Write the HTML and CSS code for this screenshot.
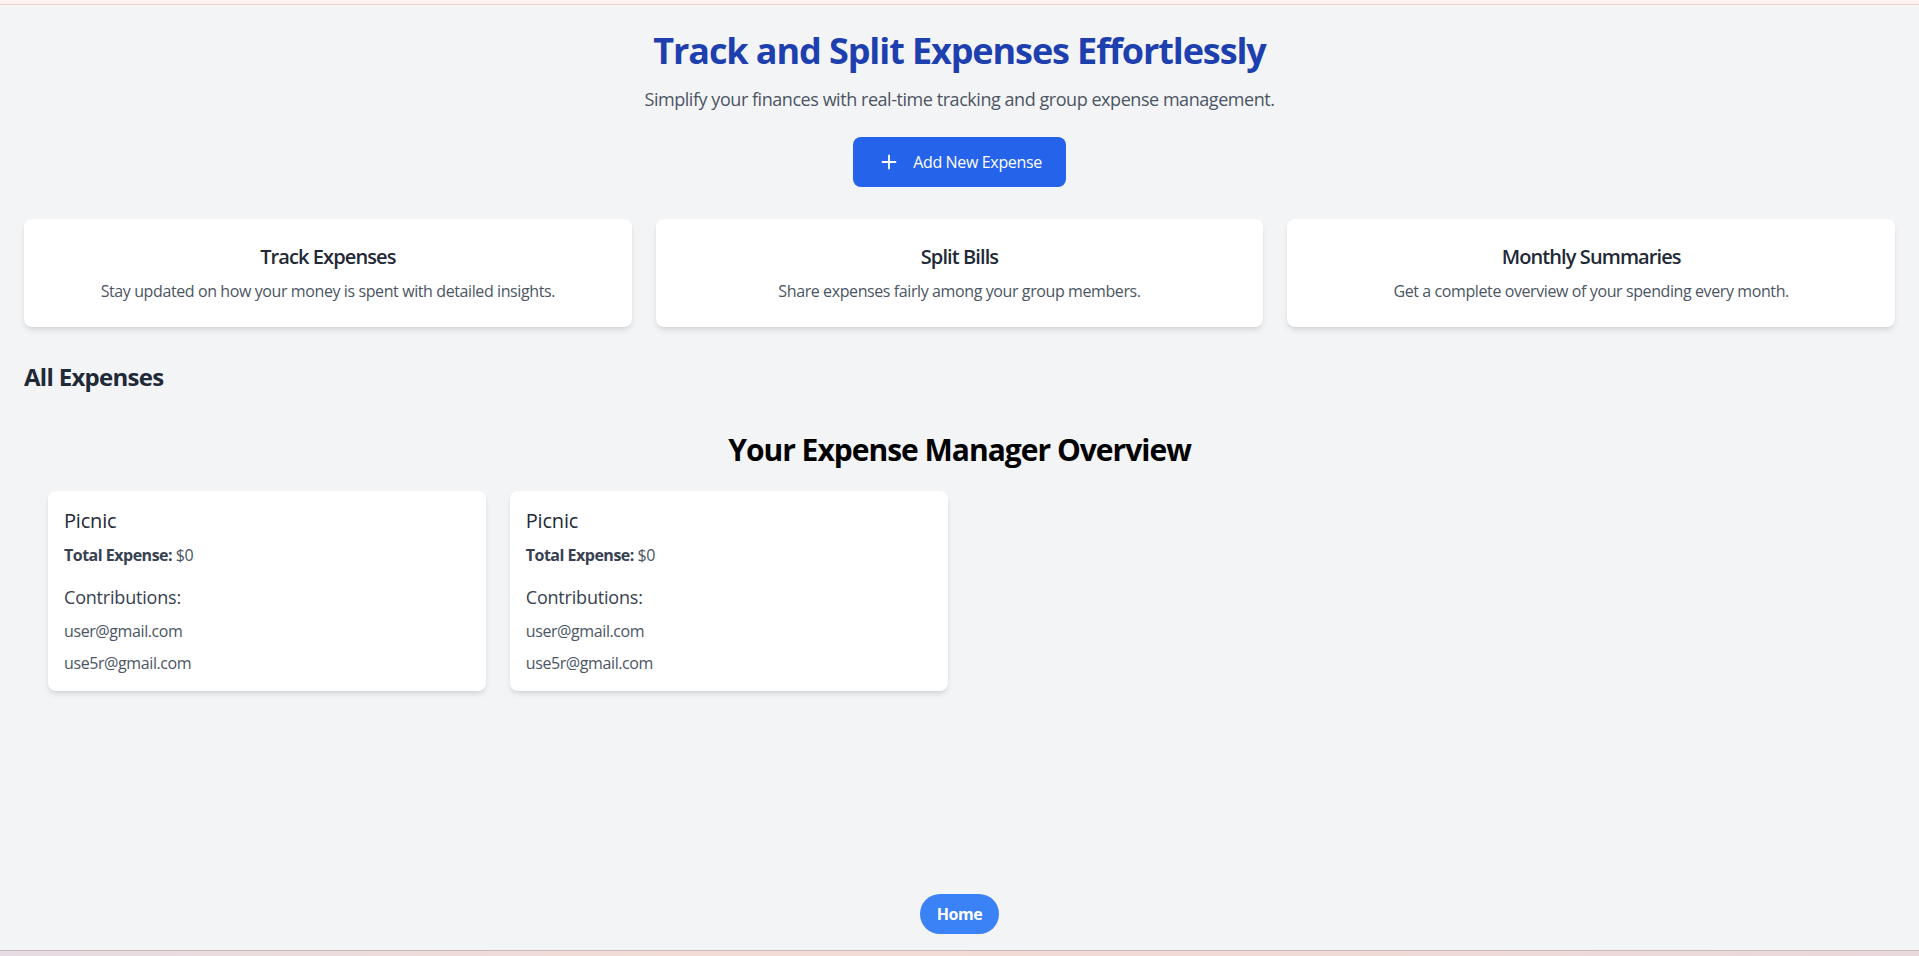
FILE: index.html
```html
<!DOCTYPE html>
<html lang="en">
<head>
<meta charset="utf-8">
<title>Expense Manager</title>
<link rel="stylesheet" href="styles.css">
</head>
<body>
<div class="topstrip"></div>
<main class="page">
  <header class="hero">
    <h1 class="hero-title">Track and Split Expenses Effortlessly</h1>
    <p class="hero-sub">Simplify your finances with real-time tracking and group expense management.</p>
    <button class="add-btn" type="button">
      <svg class="plus" width="20" height="20" viewBox="0 0 20 20" fill="none" stroke="#fff" stroke-width="1.8" stroke-linecap="round"><path d="M10 3.5v13M3.5 10h13"/></svg>
      <span>Add New Expense</span>
    </button>
  </header>

  <section class="features">
    <div class="feature">
      <h3 class="feature-title">Track Expenses</h3>
      <p class="feature-text">Stay updated on how your money is spent with detailed insights.</p>
    </div>
    <div class="feature">
      <h3 class="feature-title">Split Bills</h3>
      <p class="feature-text">Share expenses fairly among your group members.</p>
    </div>
    <div class="feature">
      <h3 class="feature-title">Monthly Summaries</h3>
      <p class="feature-text">Get a complete overview of your spending every month.</p>
    </div>
  </section>

  <h2 class="all-title">All Expenses</h2>

  <section class="overview">
    <h2 class="overview-title">Your Expense Manager Overview</h2>
    <div class="expense-grid">
      <div class="expense-card">
        <h3 class="exp-name">Picnic</h3>
        <p class="exp-total"><strong>Total Expense:</strong> $0</p>
        <h4 class="exp-contrib">Contributions:</h4>
        <ul class="exp-list">
          <li>user@gmail.com</li>
          <li>use5r@gmail.com</li>
        </ul>
      </div>
      <div class="expense-card">
        <h3 class="exp-name">Picnic</h3>
        <p class="exp-total"><strong>Total Expense:</strong> $0</p>
        <h4 class="exp-contrib">Contributions:</h4>
        <ul class="exp-list">
          <li>user@gmail.com</li>
          <li>use5r@gmail.com</li>
        </ul>
      </div>
    </div>
  </section>

  <nav class="bottom-nav">
    <button class="home-btn" type="button">Home</button>
  </nav>
</main>
<div class="bottomstrip"></div>
</body>
</html>
```

FILE: styles.css
```css
* { box-sizing: border-box; }

html, body {
  margin: 0;
  padding: 0;
}

body {
  font-family: "Segoe UI", "Open Sans", "Noto Sans", sans-serif;
  background: #f3f4f6;
  color: #1f2937;
  overflow: hidden;
}

.topstrip {
  height: 5px;
  background: #fdf4f2;
  border-bottom: 1px solid #f3cfc7;
}

.page {
  position: relative;
  height: 945px;
  padding: 26px 24px 0;
  background: #f3f4f6;
}

.hero {
  text-align: center;
}

.hero-title {
  margin: 0 0 14px;
  font-size: 36px;
  line-height: 40px;
  font-weight: 700;
  color: #1e40af;
  letter-spacing: -1.1px;
}

.hero-sub {
  margin: 0 0 24px;
  font-size: 18px;
  line-height: 28px;
  color: #4b5563;
  letter-spacing: -0.45px;
}

.add-btn {
  display: inline-flex;
  align-items: center;
  gap: 14px;
  height: 50px;
  padding: 0 24px 0 26px;
  border: 0;
  border-radius: 8px;
  background: #2563eb;
  color: #fff;
  font-family: inherit;
  font-size: 16px;
  line-height: 24px;
  letter-spacing: -0.35px;
  cursor: pointer;
}

.plus { display: block; }

.features {
  margin-top: 32px;
  display: grid;
  grid-template-columns: repeat(3, 1fr);
  gap: 24px;
}

.feature {
  background: #fff;
  border-radius: 8px;
  padding: 24px;
  text-align: center;
  box-shadow: 0 4px 6px -1px rgba(0,0,0,0.1), 0 2px 4px -2px rgba(0,0,0,0.1);
}

.feature-title {
  margin: 0 0 8px;
  font-size: 20px;
  line-height: 28px;
  font-weight: 600;
  color: #1f2937;
  letter-spacing: -0.9px;
}

.feature-text {
  margin: 0;
  font-size: 16px;
  line-height: 24px;
  color: #4b5563;
  letter-spacing: -0.4px;
}

.all-title {
  margin: 34px 0 0;
  font-size: 24px;
  line-height: 32px;
  font-weight: 700;
  color: #1f2937;
  letter-spacing: -0.7px;
}

.overview {
  padding: 0 24px;
}

.overview-title {
  margin: 39px 0 23px;
  text-align: center;
  font-size: 30px;
  line-height: 36px;
  font-weight: 700;
  color: #000;
  letter-spacing: -1px;
}

.expense-grid {
  display: grid;
  grid-template-columns: repeat(4, 1fr);
  gap: 24px;
}

.expense-card {
  background: #fff;
  border-radius: 8px;
  padding: 16px;
  box-shadow: 0 4px 6px -1px rgba(0,0,0,0.1), 0 2px 4px -2px rgba(0,0,0,0.1);
}

.exp-name {
  margin: 0 0 8px;
  font-size: 20px;
  line-height: 28px;
  font-weight: 500;
  color: #1f2937;
  letter-spacing: -0.2px;
}

.exp-total {
  margin: 0;
  font-size: 16px;
  line-height: 24px;
  color: #4b5563;
  letter-spacing: -0.5px;
}

.exp-total strong {
  font-weight: 700;
  color: #374151;
}

.exp-contrib {
  margin: 16px 0 8px;
  font-size: 18px;
  line-height: 28px;
  font-weight: 500;
  color: #374151;
  letter-spacing: -0.2px;
}

.exp-list {
  list-style: none;
  margin: 0;
  padding: 0;
  display: flex;
  flex-direction: column;
  gap: 8px;
}

.exp-list li {
  font-size: 16px;
  line-height: 24px;
  color: #4b5563;
  letter-spacing: -0.4px;
}

.bottom-nav {
  position: absolute;
  left: 0;
  right: 0;
  bottom: 16px;
  display: flex;
  justify-content: center;
}

.home-btn {
  height: 40px;
  padding: 0 17px;
  border: 0;
  border-radius: 999px;
  background: #3b82f6;
  color: #fff;
  font-family: inherit;
  font-size: 16px;
  font-weight: 700;
  line-height: 24px;
  letter-spacing: -0.5px;
  cursor: pointer;
}

.bottomstrip {
  height: 6px;
  border-top: 1px solid #c8bcbc;
  background: linear-gradient(90deg, #e6dce3 0%, #f3dcd6 35%, #f2dbd6 65%, #e9d8dc 100%);
}
```
